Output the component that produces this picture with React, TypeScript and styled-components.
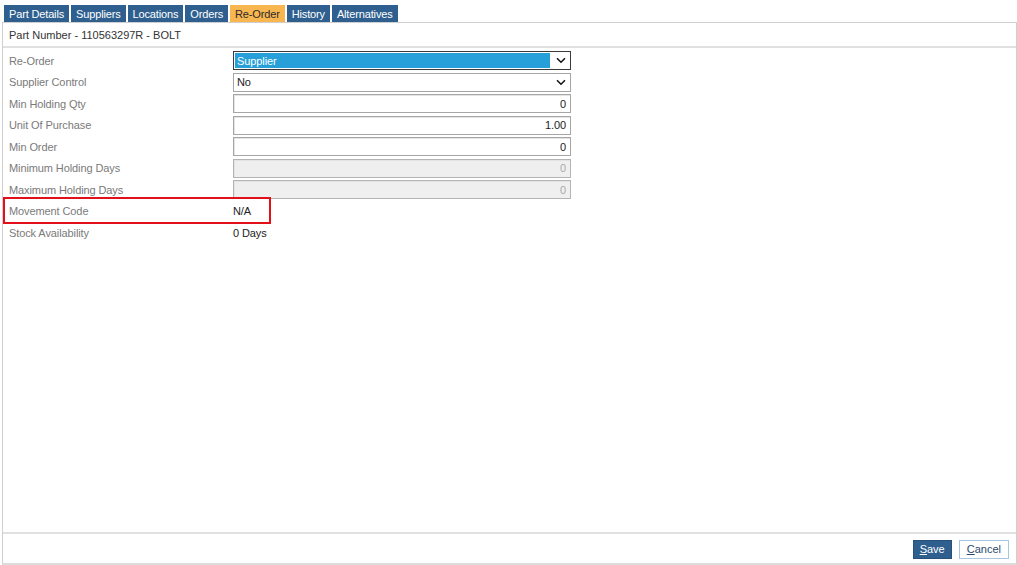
import React from "react";
import styled, { createGlobalStyle } from "styled-components";

const Global = createGlobalStyle`
  html, body { margin: 0; padding: 0; background: #fff; }
  body {
    font-family: "Liberation Sans", Arial, sans-serif;
    font-size: 11px;
    letter-spacing: -0.1px;
    color: #333;
  }
  #root { width: 1017px; height: 565px; }
`;

const Page = styled.div`
  width: 1017px;
  height: 565px;
  display: flex;
  flex-direction: column;
  box-sizing: border-box;
`;

const TabBar = styled.div`
  display: flex;
  gap: 2px;
  padding: 5px 0 0 4px;
  height: 22px;
  box-sizing: border-box;
`;

const Tab = styled.div<{ $active?: boolean }>`
  height: 17px;
  padding: 0 5px;
  display: flex;
  align-items: center;
  background: ${(p) => (p.$active ? "#f8b651" : "#2f5f8e")};
  color: ${(p) => (p.$active ? "#2b2b2b" : "#ffffff")};
  font-size: 11px;
  letter-spacing: -0.15px;
  box-sizing: border-box;
`;

const Panel = styled.div`
  margin-left: 2px;
  width: 1015px;
  flex: 1;
  border: 1px solid #cfcfcf;
  border-bottom: 2px solid #dcdcdc;
  display: flex;
  flex-direction: column;
  box-sizing: border-box;
`;

const Header = styled.div`
  height: 25px;
  padding: 0 6px;
  display: flex;
  align-items: center;
  border-bottom: 2px solid #e0e0e0;
  color: #333;
  letter-spacing: 0;
  box-sizing: border-box;
`;

const Body = styled.div`
  flex: 1;
  padding: 3px 6px 0 6px;
  display: grid;
  grid-auto-rows: 19px;
  row-gap: 2.5px;
  align-content: start;
`;

const Row = styled.div<{ $highlight?: boolean }>`
  display: flex;
  align-items: center;
  position: relative;
  &::after {
    content: "";
    display: ${(p) => (p.$highlight ? "block" : "none")};
    position: absolute;
    left: -6px;
    top: -5px;
    width: 268px;
    height: 27px;
    border: 2px solid #e3101a;
    box-sizing: border-box;
    pointer-events: none;
  }
`;

const Label = styled.div`
  width: 224px;
  color: #7a7a7a;
  flex: none;
`;

const Value = styled.div`
  color: #222;
`;

const SelectBox = styled.div<{ $focused?: boolean }>`
  width: 338px;
  height: 19px;
  box-sizing: border-box;
  border: 1px solid ${(p) => (p.$focused ? "#3a3a3a" : "#a6a6a6")};
  background: #fff;
  display: flex;
  align-items: center;
  padding: 0 4px 0 1px;
  gap: 6px;
`;

const SelectText = styled.div<{ $focused?: boolean }>`
  flex: 1;
  height: 15px;
  display: flex;
  align-items: center;
  padding-left: 2px;
  background: ${(p) => (p.$focused ? "#279fd9" : "transparent")};
  color: ${(p) => (p.$focused ? "#fff" : "#222")};
`;

const TextField = styled.input`
  width: 338px;
  height: 19px;
  box-sizing: border-box;
  border: 1px solid #a6a6a6;
  box-shadow: inset 1px 1px 0 #e4e4e4;
  padding: 0 4px;
  margin: 0;
  text-align: right;
  font-family: "Liberation Sans", Arial, sans-serif;
  font-size: 11px;
  letter-spacing: -0.1px;
  color: #222;
  background: #fff;
  outline: none;
  &:disabled {
    background: #efefef;
    color: #aaa;
    border-color: #b4b4b4;
  }
`;

const Footer = styled.div`
  height: 29px;
  border-top: 2px solid #e0e0e0;
  display: flex;
  justify-content: flex-end;
  align-items: center;
  gap: 7px;
  padding: 0 7px 0 0;
  box-sizing: content-box;
`;

const Button = styled.button<{ $primary?: boolean }>`
  height: 19px;
  padding: ${(p) => (p.$primary ? "0 6px" : "0 7px")};
  font-family: "Liberation Sans", Arial, sans-serif;
  font-size: 11px;
  letter-spacing: 0;
  border: 1px solid ${(p) => (p.$primary ? "#27507a" : "#aac5e0")};
  background: ${(p) => (p.$primary ? "#2f5f8e" : "#ffffff")};
  color: ${(p) => (p.$primary ? "#ffffff" : "#2c4a6e")};
  display: flex;
  align-items: center;
  margin-top: 1px;
  & u { text-decoration: underline; }
`;

const Chevron = () => (
  <svg width="10" height="7" viewBox="0 0 10 7">
    <path d="M1 1.2 L5 5.2 L9 1.2" fill="none" stroke="#111" strokeWidth="1.5" />
  </svg>
);

export default function App() {
  const tabs = ["Part Details", "Suppliers", "Locations", "Orders", "Re-Order", "History", "Alternatives"];
  return (
    <>
      <Global />
      <Page>
        <TabBar>
          {tabs.map((t) => (
            <Tab key={t} $active={t === "Re-Order"}>{t}</Tab>
          ))}
        </TabBar>
        <Panel>
          <Header>Part Number - 110563297R - BOLT</Header>
          <Body>
            <Row>
              <Label>Re-Order</Label>
              <SelectBox $focused>
                <SelectText $focused>Supplier</SelectText>
                <Chevron />
              </SelectBox>
            </Row>
            <Row>
              <Label>Supplier Control</Label>
              <SelectBox>
                <SelectText>No</SelectText>
                <Chevron />
              </SelectBox>
            </Row>
            <Row>
              <Label>Min Holding Qty</Label>
              <TextField readOnly value="0" />
            </Row>
            <Row>
              <Label>Unit Of Purchase</Label>
              <TextField readOnly value="1.00" />
            </Row>
            <Row>
              <Label>Min Order</Label>
              <TextField readOnly value="0" />
            </Row>
            <Row>
              <Label>Minimum Holding Days</Label>
              <TextField disabled value="0" />
            </Row>
            <Row>
              <Label>Maximum Holding Days</Label>
              <TextField disabled value="0" />
            </Row>
            <Row $highlight>
              <Label>Movement Code</Label>
              <Value>N/A</Value>
            </Row>
            <Row>
              <Label>Stock Availability</Label>
              <Value>0 Days</Value>
            </Row>
          </Body>
          <Footer>
            <Button $primary><u>S</u>ave</Button>
            <Button><u>C</u>ancel</Button>
          </Footer>
        </Panel>
      </Page>
    </>
  );
}
